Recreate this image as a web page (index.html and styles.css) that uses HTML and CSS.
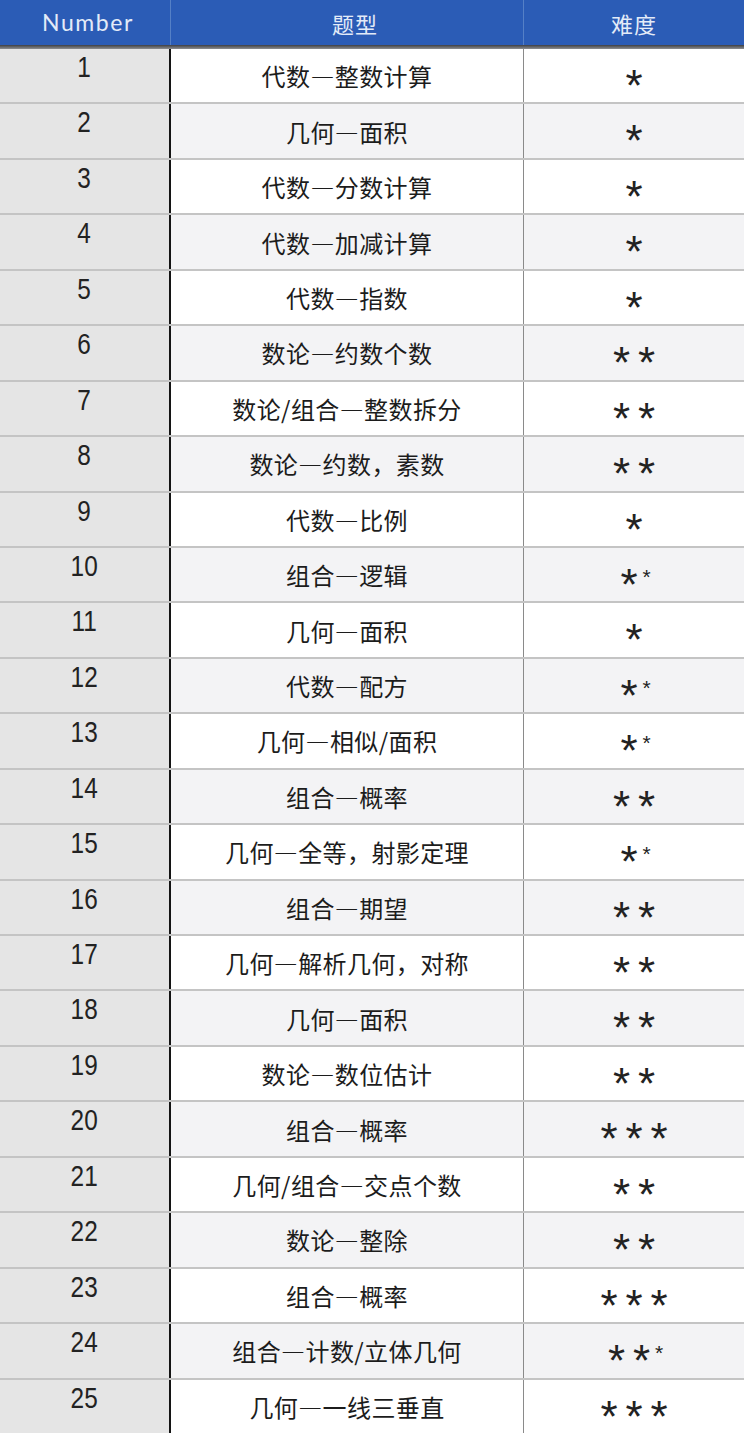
FILE: index.html
```html
<!DOCTYPE html>
<html lang="zh">
<head>
<meta charset="utf-8">
<title>题型难度</title>
<link rel="stylesheet" href="styles.css">
</head>
<body>
<div class="sheet">
  <div class="head">
    <div class="hc c1 en">Number</div>
    <div class="hc c2">题型</div>
    <div class="hc c3">难度</div>
  </div>
  <div class="shade"></div>
  <div class="row odd"><div class="num"><span>1</span></div><div class="topic">代数—整数计算</div><div class="lv"><span class="s">*</span></div></div>
  <div class="row even"><div class="num"><span>2</span></div><div class="topic">几何—面积</div><div class="lv"><span class="s">*</span></div></div>
  <div class="row odd"><div class="num"><span>3</span></div><div class="topic">代数—分数计算</div><div class="lv"><span class="s">*</span></div></div>
  <div class="row even"><div class="num"><span>4</span></div><div class="topic">代数—加减计算</div><div class="lv"><span class="s">*</span></div></div>
  <div class="row odd"><div class="num"><span>5</span></div><div class="topic">代数—指数</div><div class="lv"><span class="s">*</span></div></div>
  <div class="row even"><div class="num"><span>6</span></div><div class="topic">数论—约数个数</div><div class="lv"><span class="s">*</span><span class="s">*</span></div></div>
  <div class="row odd"><div class="num"><span>7</span></div><div class="topic">数论/组合—整数拆分</div><div class="lv"><span class="s">*</span><span class="s">*</span></div></div>
  <div class="row even"><div class="num"><span>8</span></div><div class="topic">数论—约数，素数</div><div class="lv"><span class="s">*</span><span class="s">*</span></div></div>
  <div class="row odd"><div class="num"><span>9</span></div><div class="topic">代数—比例</div><div class="lv"><span class="s">*</span></div></div>
  <div class="row even"><div class="num"><span>10</span></div><div class="topic">组合—逻辑</div><div class="lv"><span class="s">*</span><span class="s sm">*</span></div></div>
  <div class="row odd"><div class="num"><span>11</span></div><div class="topic">几何—面积</div><div class="lv"><span class="s">*</span></div></div>
  <div class="row even"><div class="num"><span>12</span></div><div class="topic">代数—配方</div><div class="lv"><span class="s">*</span><span class="s sm">*</span></div></div>
  <div class="row odd"><div class="num"><span>13</span></div><div class="topic">几何—相似/面积</div><div class="lv"><span class="s">*</span><span class="s sm">*</span></div></div>
  <div class="row even"><div class="num"><span>14</span></div><div class="topic">组合—概率</div><div class="lv"><span class="s">*</span><span class="s">*</span></div></div>
  <div class="row odd"><div class="num"><span>15</span></div><div class="topic">几何—全等，射影定理</div><div class="lv"><span class="s">*</span><span class="s sm">*</span></div></div>
  <div class="row even"><div class="num"><span>16</span></div><div class="topic">组合—期望</div><div class="lv"><span class="s">*</span><span class="s">*</span></div></div>
  <div class="row odd"><div class="num"><span>17</span></div><div class="topic">几何—解析几何，对称</div><div class="lv"><span class="s">*</span><span class="s">*</span></div></div>
  <div class="row even"><div class="num"><span>18</span></div><div class="topic">几何—面积</div><div class="lv"><span class="s">*</span><span class="s">*</span></div></div>
  <div class="row odd"><div class="num"><span>19</span></div><div class="topic">数论—数位估计</div><div class="lv"><span class="s">*</span><span class="s">*</span></div></div>
  <div class="row even"><div class="num"><span>20</span></div><div class="topic">组合—概率</div><div class="lv"><span class="s">*</span><span class="s">*</span><span class="s">*</span></div></div>
  <div class="row odd"><div class="num"><span>21</span></div><div class="topic">几何/组合—交点个数</div><div class="lv"><span class="s">*</span><span class="s">*</span></div></div>
  <div class="row even"><div class="num"><span>22</span></div><div class="topic">数论—整除</div><div class="lv"><span class="s">*</span><span class="s">*</span></div></div>
  <div class="row odd"><div class="num"><span>23</span></div><div class="topic">组合—概率</div><div class="lv"><span class="s">*</span><span class="s">*</span><span class="s">*</span></div></div>
  <div class="row even"><div class="num"><span>24</span></div><div class="topic">组合—计数/立体几何</div><div class="lv"><span class="s">*</span><span class="s">*</span><span class="s sm">*</span></div></div>
  <div class="row odd last"><div class="num"><span>25</span></div><div class="topic">几何—一线三垂直</div><div class="lv"><span class="s">*</span><span class="s">*</span><span class="s">*</span></div></div>
</div>
</body>
</html>
```

FILE: styles.css
```css
html, body {
  margin: 0;
  padding: 0;
  background: #ffffff;
}

.sheet {
  width: 744px;
  font-family: "Noto Sans CJK SC", "Noto Sans", sans-serif;
  color: #1c1c1c;
}

.head {
  display: grid;
  grid-template-columns: 171px 353px 1fr;
  height: 45px;
  background: #2b5cb6;
}

.hc {
  display: flex;
  align-items: center;
  justify-content: center;
  color: #e3ebf8;
  font-size: 22px;
  letter-spacing: 1px;
}

.hc.c1,
.hc.c2 {
  border-right: 1px solid #5580c6;
}

.hc.c2 {
  padding-left: 16px;
}

.hc.en {
  font-family: "Lato", "Open Sans", sans-serif;
  font-size: 23px;
  letter-spacing: 1.6px;
  padding-left: 6px;
  padding-bottom: 2px;
}

.shade {
  height: 4px;
  background: linear-gradient(#3d3f44, #8d8f93);
}

.row {
  display: grid;
  grid-template-columns: 171px 353px 1fr;
  height: 55.44px;
  box-sizing: border-box;
  border-bottom: 2px solid #c4c4c4;
}

.row.last {
  height: 53px;
  border-bottom: none;
}

.row.even .topic,
.row.even .lv {
  background: #f3f3f5;
}

.num {
  background: #e5e5e5;
  border-right: 2px solid #141414;
  display: flex;
  justify-content: center;
  align-items: flex-start;
  font-family: "Liberation Sans", Arial, sans-serif;
  font-size: 29px;
  line-height: 1;
  padding-top: 4px;
  color: #222;
}

.num span {
  display: inline-block;
  transform: scaleX(0.84);
}

.topic {
  display: flex;
  align-items: center;
  justify-content: center;
  font-size: 24px;
  letter-spacing: 0.4px;
  border-right: 1px solid #8a8a8a;
}

.lv {
  display: flex;
  align-items: flex-start;
  justify-content: center;
  padding-top: 27px;
}

.s {
  display: inline-block;
  width: 25px;
  height: 20px;
  font-family: "Liberation Sans", Arial, sans-serif;
  font-size: 44px;
  line-height: 20px;
  text-align: center;
  color: #222;
}

.s.sm {
  width: 10px;
  font-size: 21px;
  line-height: 20px;
  margin-top: -8px;
}
```
